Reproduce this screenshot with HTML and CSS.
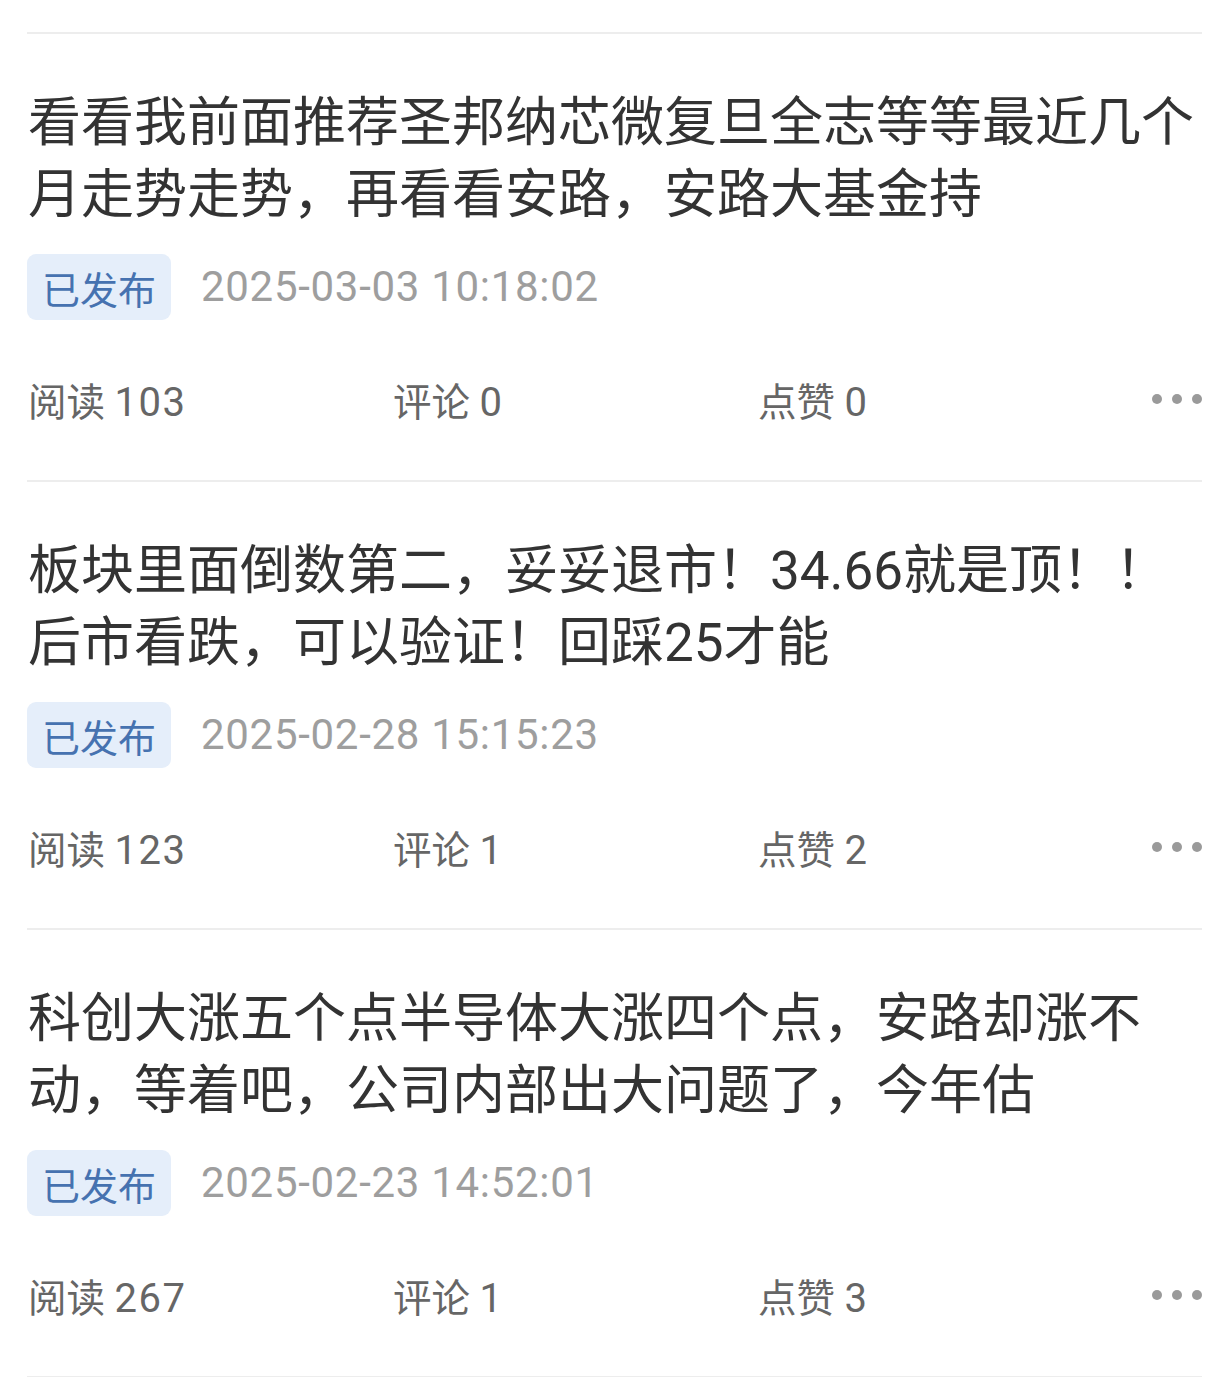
FILE: index.html
```html
<!DOCTYPE html>
<html lang="zh-CN">
<head>
<meta charset="utf-8">
<title>动态列表</title>
<link rel="stylesheet" href="styles.css">
</head>
<body>
<div class="list">
  <div class="divider"></div>
  <div class="item">
    <div class="title">看看我前面推荐圣邦纳芯微复旦全志等等最近几个月走势走势，再看看安路，安路大基金持</div>
    <div class="meta"><span class="tag">已发布</span><span class="date">2025-03-03 10:18:02</span></div>
    <div class="stats">
      <span class="stat">阅读 <b>103</b></span>
      <span class="stat">评论 <b>0</b></span>
      <span class="stat">点赞 <b>0</b></span>
      <span class="more"><i></i><i></i><i></i></span>
    </div>
  </div>
  <div class="divider"></div>
  <div class="item">
    <div class="title">板块里面倒数第二，妥妥退市！34.66就是顶！！<br>后市看跌，可以验证！回踩25才能</div>
    <div class="meta"><span class="tag">已发布</span><span class="date">2025-02-28 15:15:23</span></div>
    <div class="stats">
      <span class="stat">阅读 <b>123</b></span>
      <span class="stat">评论 <b>1</b></span>
      <span class="stat">点赞 <b>2</b></span>
      <span class="more"><i></i><i></i><i></i></span>
    </div>
  </div>
  <div class="divider"></div>
  <div class="item">
    <div class="title">科创大涨五个点半导体大涨四个点，安路却涨不动，等着吧，公司内部出大问题了，今年估</div>
    <div class="meta"><span class="tag">已发布</span><span class="date">2025-02-23 14:52:01</span></div>
    <div class="stats">
      <span class="stat">阅读 <b>267</b></span>
      <span class="stat">评论 <b>1</b></span>
      <span class="stat">点赞 <b>3</b></span>
      <span class="more"><i></i><i></i><i></i></span>
    </div>
  </div>
  <div class="divider"></div>
</div>
</body>
</html>
```
FILE: styles.css
```css
html, body {
  margin: 0;
  padding: 0;
  background: #ffffff;
}
body {
  font-family: Roboto, "Noto Sans CJK SC", sans-serif;
  width: 1220px;
}
.list {
  padding: 32px 18px 0 27px;
}
.divider {
  height: 2px;
  background: #ededed;
}
.item {
  padding: 53px 0 56px 1px;
}
.title {
  font-size: 53px;
  line-height: 72px;
  color: #333333;
  height: 144px;
  overflow: hidden;
  word-break: break-all;
}
.meta {
  display: flex;
  align-items: center;
  margin-top: 23px;
  height: 66px;
}
.tag {
  display: flex;
  align-items: center;
  height: 66px;
  margin-left: -1px;
  padding: 0 15px 0 15px;
  background: #e5eefa;
  color: #4672b0;
  font-size: 38px;
  border-radius: 9px;
}
.date {
  margin-left: 30px;
  margin-top: -2px;
  font-size: 42px;
  letter-spacing: 0.7px;
  color: #9e9e9e;
}
.stats {
  display: flex;
  align-items: center;
  margin-top: 54px;
  height: 50px;
}
.stat {
  width: 365px;
  font-size: 38.5px;
  color: #666666;
}
.stat b {
  font-weight: normal;
  font-size: 40px;
  letter-spacing: 1.5px;
}
.more {
  margin-left: auto;
  display: flex;
  gap: 10px;
  margin-top: -1px;
}
.more i {
  display: block;
  width: 10px;
  height: 10px;
  border-radius: 50%;
  background: #9a9a9a;
}
```
